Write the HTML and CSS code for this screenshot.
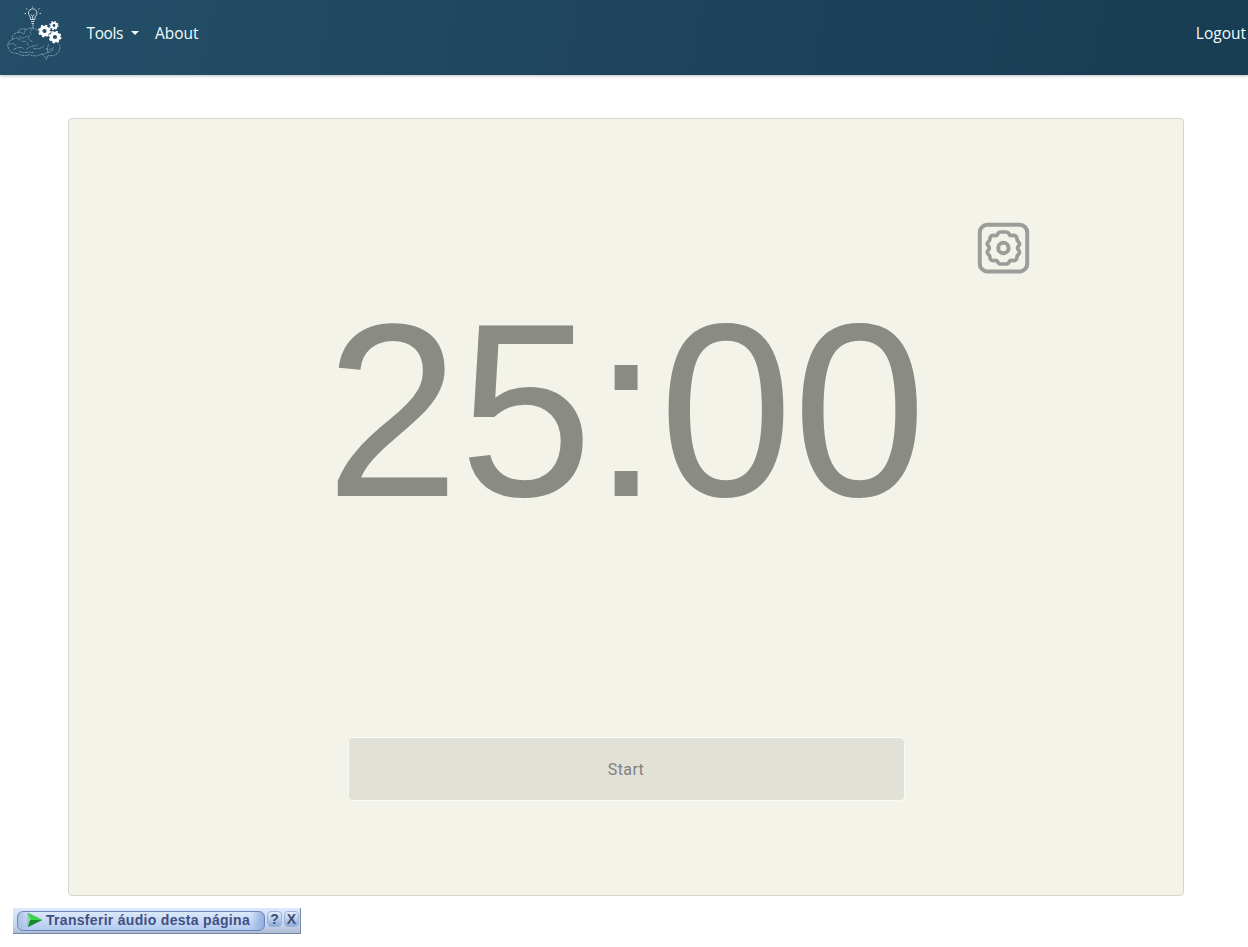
FILE: index.html
```html
<!DOCTYPE html>
<html lang="en">
<head>
<meta charset="utf-8">
<title>Timer</title>
<link rel="stylesheet" href="styles.css">
</head>
<body>
<header class="navbar">
  <a class="brand" href="#">
    <svg width="60" height="60" viewBox="4 3 60 60" fill="none">
      <g stroke="#c5d3dc" stroke-width="1" transform="translate(0 1.500)">
        <path d="M30.5 18v-1.500c0-1.500-2-2.500-2-5a4.200 4.200 0 0 1 8.400 0c0 2.500-2 3.500-2 5V18zM31 20h3.500M31.500 22h2.500M31 13l1.500 2 1.500-2M32.700 15v3"/>
        <path d="M32.700 6v-1M27 8l-1-1.500M38.500 8l1-1.500M26 12h-1.500M39.500 12h1.500M33 23v4" stroke-dasharray="1.500 .7"/>
      </g>
      <g stroke="#8ea5b4" stroke-width=".8" stroke-dasharray="3 .8 1.500 .6" transform="translate(-.5 1.500)">
        <path d="M38 29c-4-3-8-3-11-1-4-2-8 0-9 3-4 1-6 4-5 7-4 1-6 5-4 9 1 4 5 5 9 5 3 2 8 3 12 1 4 2 9 2 12-1l3 3 2 3 1-4c6 1 11-1 12-6 1-2 1-4-1-6"/>
        <path d="M18 31c3-1 5 0 6 2M27 28c-2 1-3 3-2 5M33 28c-3 1-3 3-1 5M13 38c3-2 6-2 8 1M20 35c3 3 6 1 8-1M30 34c-2 3-1 5 3 6M9 43c4-2 6-1 8 2M14 48c4-2 7-3 10-1M23 40c3-1 5 1 6 4M27 48c3-4 8-3 11-5M34 47c4 1 8 0 11-3M49 43c-1 3-2 6 0 9M42 53c4-1 8-2 12-5M20 50c5 2 10 0 14 1M46 47c3 2 6 1 8-1"/>
      </g>
      <g stroke="#fff">
        <circle cx="44.500" cy="31" r="3.700" stroke-width="3.200"/>
        <circle cx="44.500" cy="31" r="5.600" stroke-width="1.600" stroke-dasharray="2.300 2.098"/>
        <circle cx="54" cy="25.500" r="2.500" stroke-width="2.200"/>
        <circle cx="54" cy="25.500" r="4" stroke-width="1.200" stroke-dasharray="1.640 1.500"/>
        <circle cx="55" cy="37" r="3.700" stroke-width="3.200"/>
        <circle cx="55" cy="37" r="5.600" stroke-width="1.600" stroke-dasharray="2.300 2.098"/>
      </g>
    </svg>
  </a>
  <nav class="menu">
    <a class="link tools" href="#"><span class="label">Tools</span><span class="caret"></span></a>
    <a class="link" href="#">About</a>
  </nav>
  <a class="link logout" href="#">Logout</a>
</header>
<main class="card">
  <button class="settings" aria-label="Settings">
    <svg width="53" height="52" viewBox="0 0 53 52" fill="none" stroke="#9c9c9a" stroke-width="4">
      <rect x="2.800" y="2.800" width="47.400" height="46.600" rx="7.500"/>
      <circle cx="26.400" cy="26" r="5.200"/>
      <path stroke-width="3.700" stroke-linejoin="round" d="M24 10H28.800Q31.200 10 32 12Q32.800 14 35 13.500Q39.800 12.800 40 17.200Q40 18.500 41.300 19.600Q43.600 21.800 41.600 23.700Q39.600 26 41.600 28.300Q43.600 30.200 41.300 32.400Q40 33.500 40 34.800Q39.800 39.200 35 38.500Q32.800 38 32 40Q31.200 42 28.800 42H24Q21.600 42 20.800 40Q20 38 17.800 38.500Q13 39.200 12.800 34.800Q12.800 33.500 11.500 32.400Q9.200 30.200 11.200 28.300Q13.200 26 11.200 23.700Q9.200 21.800 11.500 19.600Q12.800 18.500 12.800 17.200Q13 12.800 17.800 13.500Q20 14 20.800 12Q21.600 10 24 10Z"/>
    </svg>
  </button>
  <div class="time">25:00</div>
  <button class="start">Start</button>
</main>
<aside class="download">
  <button class="transfer">
    <svg class="play" width="16" height="16" viewBox="0 0 16 16"><path d="M1 1 15 8 1 15l2-7z" fill="#2fdc46"/><path d="M3 8h12L1 15z" fill="#17852c"/><path d="M1 1 15 8 1 15z" fill="none" stroke="#4daa62" stroke-width=".6"/></svg>
    <span>Transferir áudio desta página</span>
  </button>
  <button class="mini">?</button>
  <button class="mini">X</button>
</aside>
</body>
</html>
```
FILE: styles.css
```css
* { box-sizing: border-box; }
body { margin: 0; background: #fff; font-family: "Open Sans", sans-serif; }
button { border: 0; padding: 0; background: none; }
.navbar {
  display: flex;
  height: 75px;
  padding: 3px 2px 0 4px;
  background: linear-gradient(100deg, #244e68, #183c52);
  box-shadow: 0 1px 3px rgba(0, 0, 0, .25);
}
.brand { display: block; width: 60px; height: 60px; }
.menu { display: flex; gap: 16px; padding-left: 22px; }
.link {
  padding-top: 19px;
  color: #f0fcfc;
  font-size: 15.500px;
  line-height: 23px;
  text-decoration: none;
}
.tools { display: flex; width: 53px; justify-content: space-between; }
.label { padding-left: .5px; letter-spacing: -.4px; }
.caret {
  width: 0;
  height: 0;
  margin-top: 9px;
  border: 4.500px solid transparent;
  border-top-color: #f0fcfc;
  border-bottom: 0;
}
.logout { margin-left: auto; }
.card {
  display: flex;
  flex-direction: column;
  align-items: center;
  width: 1116px;
  height: 778px;
  margin: 43px 0 0 68px;
  padding-top: 103px;
  background: #f3f3e9;
  border: 1px solid #d5d5cd;
  border-radius: 4px;
}
.settings { width: 53px; height: 52px; margin-right: 153px; align-self: flex-end; }
.settings svg { display: block; }
.time {
  height: 276px;
  color: #8b8b86;
  font: 240px/276px "Liberation Sans", Arial, sans-serif;
  transform: scaleY(1.028);
  transform-origin: 0 190px;
}
.start {
  width: 557px;
  height: 64px;
  margin-top: 187px;
  background: #e1e1d8;
  border: 1px solid #fafaf6;
  border-radius: 5px;
  color: #80807d;
  font: 16px Roboto, sans-serif;
  letter-spacing: .4px;
}
.download {
  display: flex;
  width: 288px;
  height: 26px;
  margin: 12px 0 0 13px;
  padding: 3px 1px 2px 4px;
  gap: 2px;
  background: linear-gradient(#dce9ff, #c8d6ec 65%, #afbdd4);
  border-right: 1px solid #7588aa;
  border-bottom: 1px solid #7588aa;
}
.transfer {
  display: flex;
  align-items: center;
  width: 248px;
  height: 20px;
  padding: 0 0 2px 9px;
  gap: 3px;
  background: linear-gradient(90deg, #a9bfe3, transparent 12px, transparent 232px, #91ace0), linear-gradient(#dce8fa, #b2caf1);
  border: 1px solid #7085bb;
  border-radius: 6px;
  color: #425080;
  font: bold 14px "Liberation Sans", Arial, sans-serif;
  letter-spacing: .3px;
  white-space: nowrap;
}
.play { flex: none; }
.mini {
  width: 15px;
  height: 16px;
  background: linear-gradient(#e5effc, #8eabd9);
  border: 1px solid #9eb2d7;
  border-radius: 4px;
  color: #3b4f71;
  font: bold 14px/14px "Liberation Sans", Arial, sans-serif;
}
```
